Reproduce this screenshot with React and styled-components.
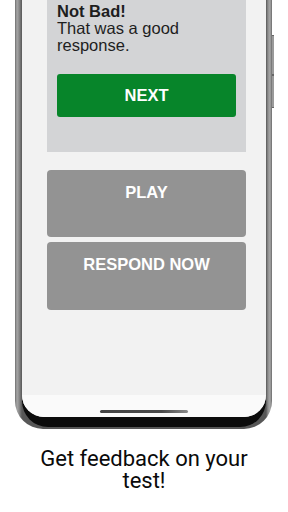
import React from "react";
import styled, { createGlobalStyle } from "styled-components";

const GlobalStyle = createGlobalStyle`
	html, body {
		margin: 0;
		padding: 0;
		background: #ffffff;
	}
	* {
		box-sizing: border-box;
	}
`;

const Stage = styled.div`
	width: 288px;
	height: 512px;
	overflow: hidden;
	display: flex;
	flex-direction: column;
	background: #ffffff;
	font-family: "Liberation Sans", Arial, sans-serif;
`;

const Phone = styled.div`
	position: relative;
	margin-left: 15px;
	width: 257px;
	padding: 0 6px 2px 7px;
	border-radius: 0 0 28px 28px;
	background: linear-gradient(
		to right,
		#6e6e6e 0px,
		#a6a6a6 2px,
		#8c8c8c 4px,
		#575757 7px,
		#575757 calc(100% - 6px),
		#8e8e8e calc(100% - 4px),
		#a8a8a8 calc(100% - 2px),
		#6a6a6a 100%
	);
`;

const SideKey = styled.div`
	position: absolute;
	right: -2px;
	top: ${props => props.top}px;
	width: 2px;
	height: ${props => props.h}px;
	background: #9a9a9a;
	border-top: 1px solid #666;
	border-bottom: 1px solid #666;
`;

const Bezel = styled.div`
	background: #0c0c0c;
	padding-bottom: 10px;
	border-radius: 0 0 26px 26px;
`;

const Screen = styled.div`
	height: 417px;
	display: flex;
	flex-direction: column;
	background: #f2f2f2;
	border-radius: 0 0 22px 22px;
	overflow: hidden;
`;

const Content = styled.div`
	flex: 1;
	display: flex;
	flex-direction: column;
	padding: 0 20px 0 25px;
`;

const Card = styled.div`
	background: #d3d4d6;
	padding: 3px 10px 35px;
	color: #1e1e1e;
`;

const Title = styled.div`
	font-size: 16.5px;
	line-height: 17px;
	font-weight: 700;
`;

const Message = styled.div`
	font-size: 16.5px;
	line-height: 16.5px;
`;

const NextButton = styled.button`
	display: block;
	width: 100%;
	height: 43px;
	margin-top: 21px;
	border: none;
	border-radius: 3px;
	background: #07852a;
	color: #ffffff;
	font-family: inherit;
	font-size: 16.5px;
	font-weight: 700;
	cursor: pointer;
`;

const ActionButton = styled.button`
	display: flex;
	justify-content: center;
	align-items: flex-start;
	width: 100%;
	height: ${props => props.h}px;
	margin-top: ${props => props.gap}px;
	padding: 13px 0 0;
	border: none;
	border-radius: 4px;
	background: #939393;
	color: #ffffff;
	font-family: inherit;
	font-size: 16.5px;
	line-height: 19px;
	font-weight: 700;
	cursor: pointer;
`;

const NavBar = styled.div`
	height: 22px;
	background: #fafafa;
	display: flex;
	justify-content: center;
	padding-top: 15px;
`;

const HomeBar = styled.div`
	width: 88px;
	height: 3px;
	border-radius: 2px;
	background: linear-gradient(to right, #444 0%, #4a4a4a 70%, #8a8a8a 100%);
`;

const Caption = styled.div`
	margin-top: 19px;
	text-align: center;
	font-family: Roboto, "Noto Sans", sans-serif;
	font-size: 22px;
	line-height: 22px;
	color: #0a0a0a;
	padding: 0 30px;
`;

const App = () => (
	<>
		<GlobalStyle />
		<Stage>
			<Phone>
				<SideKey top={35} h={40} />
				<SideKey top={75} h={33} />
				<Bezel>
					<Screen>
						<Content>
							<Card>
								<Title>Not Bad!</Title>
								<Message>That was a good response.</Message>
								<NextButton>NEXT</NextButton>
							</Card>
							<ActionButton h={67} gap={18}>PLAY</ActionButton>
							<ActionButton h={68} gap={5}>RESPOND NOW</ActionButton>
						</Content>
						<NavBar>
							<HomeBar />
						</NavBar>
					</Screen>
				</Bezel>
			</Phone>
			<Caption>Get feedback on your test!</Caption>
		</Stage>
	</>
);

export default App;
